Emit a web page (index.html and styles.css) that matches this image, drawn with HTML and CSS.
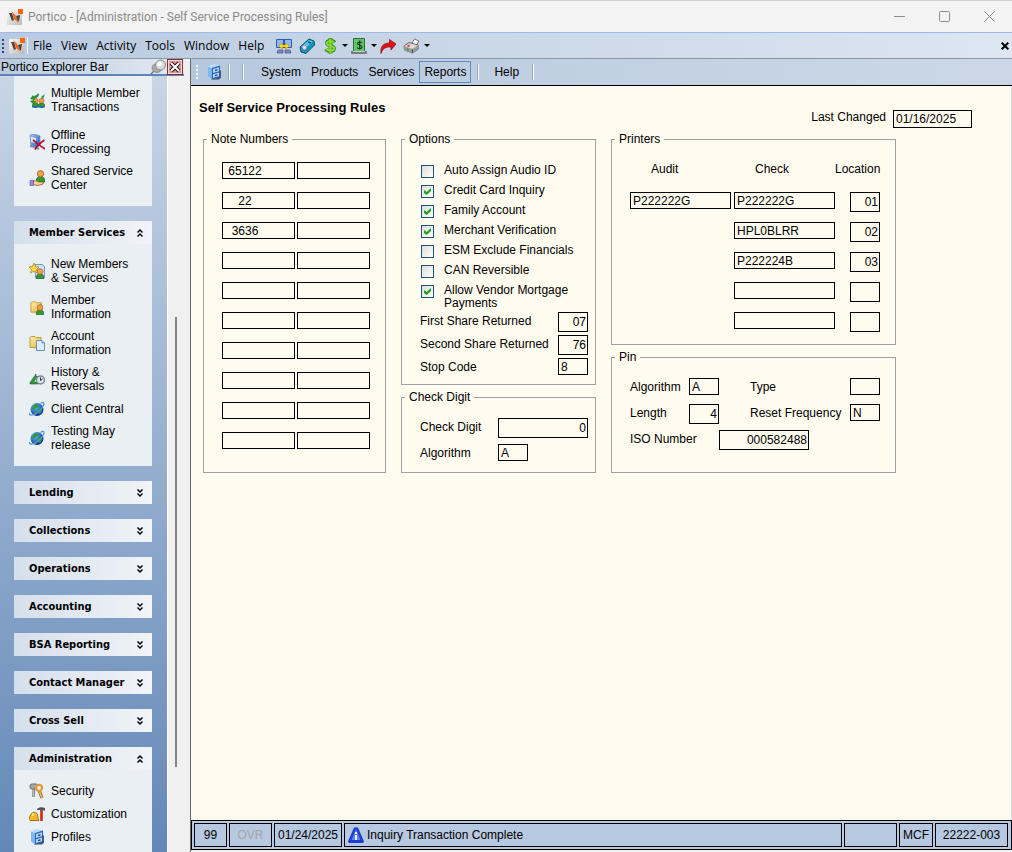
FILE: index.html
```html
<!DOCTYPE html>
<html lang="en">
<head>
<meta charset="UTF-8">
<title>Portico - [Administration - Self Service Processing Rules]</title>
<link rel="stylesheet" href="styles.css">
</head>
<body>
	<svg class="defs" aria-hidden="true">
		<defs>
			<linearGradient id="g-gold" x1="0" y1="0" x2="1" y2="1"><stop offset="0" stop-color="#fff3b0"/><stop offset="1" stop-color="#e0b23c"/></linearGradient>
			<linearGradient id="g-blue" x1="0" y1="0" x2="1" y2="1"><stop offset="0" stop-color="#9fd0f8"/><stop offset="1" stop-color="#1c55b8"/></linearGradient>
			<linearGradient id="g-logo" x1="0" y1="0" x2="1" y2="1"><stop offset="0" stop-color="#fafafa"/><stop offset="1" stop-color="#b9b9b9"/></linearGradient>
			<radialGradient id="g-globe" cx="35%" cy="30%" r="70%"><stop offset="0" stop-color="#6fc2ff"/><stop offset="1" stop-color="#0b2e9c"/></radialGradient>
		</defs>
		<symbol id="logo" viewBox="0 0 16 16">
			<rect x="0" y="1" width="15" height="15" rx="1" fill="url(#g-logo)"/>
			<path d="M2 4l3 0 2 7-2 1z" fill="#444"/>
			<path d="M9 7l4-1-1 6-2 0z" fill="#444"/>
			<path d="M4.500 2l4.500 5 3 7-5-4z" fill="#f26a1b"/>
			<rect x="11" y="0" width="5" height="5" fill="#f60"/>
		</symbol>
		<symbol id="globe" viewBox="0 0 16 16">
			<circle cx="8" cy="8.500" r="6.500" fill="url(#g-globe)"/>
			<path d="M4 5l3-2 3 1-1 2-2 1-2 2-2-1zM9 8l4-1v3l-2 3-2-1zM5 11l2 0 1 2-2 1z" fill="#2c9a3a"/>
			<path d="M1 12C-1 15 4 15 9 11S16 2 14.500 1.500c-1-.4-3 1-3 1" fill="none" stroke="#4b9bd8" stroke-width="1.300"/>
		</symbol>
		<symbol id="cabinet" viewBox="0 0 16 16">
			<path d="M5 15.500h8l2-2V6z" fill="#4a5566"/>
			<path d="M2 2.500L6 4v11.500L2 12.500z" fill="#7fb6f2"/>
			<path d="M2 2.500L7 0l7 1.500L6 4z" fill="#b9dcfb"/>
			<path d="M6 4l8-2.500V13l-8 2.500z" fill="#1f62be"/>
			<path d="M7 5l6-1.800v4L7 9zM7 10.300l6-1.800v3.700L7 14z" fill="#b5d6f7"/>
			<path d="M9 6.500l2.500-.7M9 11.600l2.500-.7" stroke="#28456e" stroke-width="1.400"/>
		</symbol>
		<symbol id="folder" viewBox="0 0 16 16">
			<path d="M1 3.500l1-1h4l1 1h5v10H1z" fill="url(#g-gold)" stroke="#c29a35"/>
		</symbol>
		<symbol id="person" viewBox="2 0 12 16">
			<path d="M2 15.500c0-5 3-7 6-7s6 2 6 7z" fill="#2f9a35" stroke="#1d6423"/>
			<circle cx="8" cy="5" r="4.300" fill="#f0a044" stroke="#a65e1c"/>
		</symbol>
		<symbol id="up" viewBox="0 0 8 10"><path d="M1.500 4.500L4 2l2.500 2.500M1.500 8.500L4 6l2.500 2.500" fill="none" stroke="#000" stroke-width="1.500"/></symbol>
		<symbol id="down" viewBox="0 0 8 10"><path d="M1.500 1.500L4 4l2.500-2.500M1.500 5.500L4 8l2.500-2.500" fill="none" stroke="#000" stroke-width="1.500"/></symbol>
	</svg>

	<header class="titlebar">
		<svg class="icon"><use href="#logo"/></svg>
		<span class="title">Portico - [Administration - Self Service Processing Rules]</span>
		<div class="winbuttons">
			<button type="button" aria-label="Minimize"><svg viewBox="0 0 11 11"><path d="M0 5.500h11"/></svg></button>
			<button type="button" aria-label="Maximize"><svg viewBox="0 0 11 11"><rect x=".5" y=".5" width="10" height="10" rx="1"/></svg></button>
			<button type="button" aria-label="Close"><svg viewBox="0 0 11 11"><path d="M.5.5l10 10M10.500.5l-10 10"/></svg></button>
		</div>
	</header>

	<nav class="menubar">
		<span class="grip"></span>
		<svg class="icon"><use href="#logo"/></svg>
		<div class="menus">
			<a href="#">File</a>
			<a href="#">View</a>
			<a href="#">Activity</a>
			<a href="#">Tools</a>
			<a href="#">Window</a>
			<a href="#">Help</a>
		</div>
		<div class="tools">
			<button type="button" aria-label="Connections"><svg class="icon" viewBox="0 0 16 16">
				<path d="M.5 1.500h8v8h-8zM7.500 1.500h8v8h-8z" fill="#8db9f2" stroke="#2b59b5"/>
				<path d="M2 12h5v3H1zM9 12h5l1 3H9z" fill="#7c8cc0" stroke="#454f80" stroke-width=".7"/>
				<path d="M2.500 8l4-3v2h3V5l4 3-4 3V9h-3v2z" fill="#ffe02e" stroke="#ba8a00" stroke-width=".6"/>
			</svg></button>
			<button type="button" aria-label="Terminal"><svg class="icon" viewBox="0 0 16 16">
				<path d="M1 9l9-8 5 2 .500 4L7 15.500 2 14z" fill="#1493b5" stroke="#07506e"/>
				<path d="M2 9l8-7 4 1.500L6.500 10z" fill="#52cde6"/>
				<circle cx="5.500" cy="9.500" r="2.200" fill="#f4dcf4" stroke="#9462b3" stroke-width=".6"/>
				<path d="M9 4l3 1" stroke="#08526b" stroke-width="1.500"/>
			</svg></button>
			<button type="button" aria-label="Money"><svg class="icon" viewBox="0 0 16 16">
				<path d="M12.500 4.500C11.500 2.500 5 2 5 5.200 5 8.500 12 7 12 10.500c0 3.500-7 3-8 .500M8.500 0v15.500" fill="none" stroke="#267f12" stroke-width="3.600"/>
				<path d="M12 4.500C11 2.500 5 2.500 5 5.200 5 8.500 12 7 12 10.500c0 3-6.500 2.500-7.500.500M8.500.5V15" fill="none" stroke="#86dc35" stroke-width="2.200"/>
			</svg><i class="arrow"></i></button>
			<button type="button" aria-label="Cash"><svg class="icon" viewBox="0 0 16 16">
				<path d="M2.500.5h11v13h-11z" fill="#63c46b" stroke="#276f35"/>
				<path d="M0 13h16v3H0z" fill="#777f80"/><path d="M2 13.500h12" stroke="#c8cccb"/>
				<path d="M11 5c-1-1.500-4.500-1.200-4.500.500C6.500 7.500 11 6.500 11 9c0 2-4 2-5 .500M8.700 2.500v9" fill="none" stroke="#103d1a" stroke-width="1.200"/>
			</svg><i class="arrow"></i></button>
			<button type="button" aria-label="Forward"><svg class="icon" viewBox="0 0 16 16">
				<path d="M1 15.500C0 8 4 5 9.500 5V1.500L16 6l-5 6V9C6 8.500 2.500 10.500 1 15.500z" fill="#dd151c" stroke="#8d090e" stroke-width=".7"/>
			</svg></button>
			<button type="button" aria-label="Print"><svg class="icon wide" viewBox="0 0 16 16">
				<path d="M8 6l3-5 4.500 2-3 5z" fill="#fff" stroke="#777"/>
				<path d="M.5 8l5-3.500 9 2.500.5 4-6 4L1 12z" fill="#dcdcdc" stroke="#666"/>
				<path d="M.5 8l8.500 3 6-4v4l-6 4L1 12z" fill="#9b9b9b"/>
				<path d="M9 11v4" stroke="#555"/><path d="M4 7.500l2 .5" stroke="#e33" stroke-width="2"/><path d="M3 11l2 .700" stroke="#3a3" stroke-width="1.500"/>
			</svg><i class="arrow"></i></button>
		</div>
		<button type="button" class="mdiclose" aria-label="Close form"><svg viewBox="0 0 8 8"><path d="M.7.7l6.600 6.600M7.300.7L.7 7.300"/></svg></button>
	</nav>

	<div class="workspace">
		<aside class="explorer">
			<div class="explorer-head">
				<h2>Portico Explorer Bar</h2>
				<button type="button" aria-label="Pin"><svg class="icon" viewBox="0 0 16 16">
					<path d="M1 15l4-4" stroke="#777" stroke-width="1.500"/>
					<ellipse cx="7" cy="9" rx="5" ry="4.500" fill="#aaa" stroke="#777" stroke-width=".7"/>
					<circle cx="10.500" cy="6" r="5" fill="#d9d9d9" stroke="#8b8b8b"/><circle cx="9.500" cy="5" r="2.500" fill="#fff"/>
				</svg></button>
				<button type="button" aria-label="Close explorer"><svg class="icon" viewBox="0 0 16 16">
					<rect x=".5" y=".5" width="15" height="15" fill="#d99a9c" stroke="#8d2e35"/>
					<rect x="1.500" y="1.500" width="13" height="13" fill="none" stroke="#f3dada"/>
					<path d="M4 4l8 8M12 4l-8 8" stroke="#2e1418" stroke-width="4"/><path d="M4 4l8 8M12 4l-8 8" stroke="#fff" stroke-width="2"/>
				</svg></button>
			</div>
			<div class="explorer-body">
				<div class="groups">
					<div class="panel first">
						<a class="item tall" href="#"><svg class="icon" viewBox="0 0 16 16">
							<use href="#person" x="3" y="5" width="7" height="11"/><use href="#person" x="9" y="5" width="7" height="11"/>
							<path d="M4.500 14h4v2h-4zM10.500 14h4v2h-4z" fill="#2364c8"/>
							<path d="M1 7l3-4 1 1.500C7 3 8 3 9 1l1 1.500C9 6 7 6 5.500 6.500L6 8zM1 9l4 4v-2l3-1-3-1V8zM12 5l4-3-2 5z" fill="#27903a"/>
						</svg><span>Multiple Member Transactions</span></a>
						<a class="item" href="#"><svg class="icon" viewBox="0 0 16 16">
							<path d="M1 1l4-1 6 2v9l-4 3-5-2z" fill="url(#g-blue)" stroke="#6786b2" stroke-width=".7"/>
							<path d="M2 3l5 1v5L2 8z" fill="#d7edff"/><path d="M1 12l5 1 4 2" stroke="#7390b5" stroke-width="2"/>
							<path d="M4 6c3 2 7 6 12 9M15.500 6C11 9 8 12 6 15.500" fill="none" stroke="#b80d25" stroke-width="1.700"/>
						</svg><span>Offline Processing</span></a>
						<a class="item" href="#"><svg class="icon" viewBox="0 0 16 16">
							<use href="#person" x="7" y="0" width="9" height="12"/>
							<path d="M4 11h4l2 1h5l-1 2-5 1.500-5-1z" fill="#f8d48c" stroke="#8a5a1e" stroke-width=".8"/>
							<path d="M1 10.500h3.500v5H1z" fill="#9b8ae6" stroke="#5747a8" stroke-width=".6"/>
						</svg><span>Shared Service Center</span></a>
					</div>
					<section>
						<button type="button" class="group">Member Services<svg class="chev"><use href="#up"/></svg></button>
						<div class="panel">
							<a class="item" href="#"><svg class="icon" viewBox="0 0 16 16">
								<path d="M6 1.500h7l2.500 2V15h-9z" fill="#cfe4fa" stroke="#6d93c4"/>
								<use href="#person" x="7" y="5" width="8" height="11"/>
								<path d="M5 0l1.500 3.500L10 4 7.500 6.500 8.500 10 5 8 1.500 10l1-3.500L0 4l3.500-.500z" fill="#ffd84a" stroke="#a67912" stroke-width=".7"/>
							</svg><span>New Members &amp;&nbsp;Services</span></a>
							<a class="item" href="#"><svg class="icon" viewBox="0 0 16 16"><use href="#folder" x="1" width="15" height="16"/><use href="#person" x="7" y="5" width="8" height="11"/></svg><span>Member Information</span></a>
							<a class="item" href="#"><svg class="icon" viewBox="0 0 16 16"><use href="#folder" y="-1" width="16" height="16"/><path d="M7.500 5.500H13l2.500 2.500v7.500h-8z" fill="#dceefe" stroke="#6b91bf"/><path d="M13 5.500V8h2.500" fill="none" stroke="#6b91bf"/></svg><span>Account Information</span></a>
							<a class="item" href="#"><svg class="icon" viewBox="0 0 16 16">
								<path d="M1 11.500L7 3v2.500h3v2H7L4.500 11H9v2H1z" fill="#32943b" stroke="#1e6426" stroke-width=".6"/>
								<circle cx="11.500" cy="9" r="4" fill="#d5e3e8" stroke="#788b94" stroke-width="1.400"/><path d="M11.500 6.500v3l2-1.500" fill="none" stroke="#334"/>
							</svg><span>History &amp; Reversals</span></a>
							<a class="item" href="#"><svg class="icon"><use href="#globe"/></svg><span>Client Central</span></a>
							<a class="item" href="#"><svg class="icon"><use href="#globe"/></svg><span>Testing May release</span></a>
						</div>
					</section>
					<button type="button" class="group">Lending<svg class="chev"><use href="#down"/></svg></button>
					<button type="button" class="group">Collections<svg class="chev"><use href="#down"/></svg></button>
					<button type="button" class="group">Operations<svg class="chev"><use href="#down"/></svg></button>
					<button type="button" class="group">Accounting<svg class="chev"><use href="#down"/></svg></button>
					<button type="button" class="group">BSA Reporting<svg class="chev"><use href="#down"/></svg></button>
					<button type="button" class="group">Contact Manager<svg class="chev"><use href="#down"/></svg></button>
					<button type="button" class="group">Cross Sell<svg class="chev"><use href="#down"/></svg></button>
					<section>
						<button type="button" class="group">Administration<svg class="chev"><use href="#up"/></svg></button>
						<div class="panel">
							<a class="item" href="#"><svg class="icon" viewBox="0 0 16 16">
								<path d="M5 5l-.5 9" stroke="#6e7074" stroke-width="2.600"/><path d="M5 5l-.5 9" stroke="#c4c3c4" stroke-width="1.200"/>
								<rect x="1" y="1" width="8" height="5" rx="2" fill="#a9a9a9" stroke="#66686c"/>
								<path d="M10 7l3 8" stroke="#8a5c1d" stroke-width="3.200"/><path d="M10 7l3 8" stroke="#f3b550" stroke-width="1.800"/>
								<circle cx="10" cy="4.800" r="3" fill="#fff" stroke="#dd9938" stroke-width="2.300"/>
							</svg><span>Security</span></a>
							<a class="item" href="#"><svg class="icon" viewBox="0 0 16 16">
								<path d="M0 13.500c1-5 3-8 6.500-7 2.500 1 2.500 4 2.500 6l1 2H1z" fill="#f8b821" stroke="#8e5d0b" stroke-width=".8"/><path d="M4 7v3" stroke="#fff0a4" stroke-width="1.300"/>
								<path d="M8 3c2-2 5-2 8-1v3l-2-1H8z" fill="#51565d"/><path d="M12.500 4v11" stroke="#c82a18" stroke-width="2.600"/>
							</svg><span>Customization</span></a>
							<a class="item" href="#"><svg class="icon"><use href="#cabinet"/></svg><span>Profiles</span></a>
						</div>
					</section>
				</div>
				<div class="track"><span class="thumb"></span></div>
			</div>
		</aside>

		<main class="form">
			<nav class="formbar">
				<span class="grip light"></span>
				<button type="button" aria-label="Profiles"><svg class="icon"><use href="#cabinet"/></svg></button>
				<span class="sep"></span>
				<span class="sep second"></span>
				<a href="#">System</a>
				<a href="#">Products</a>
				<a href="#">Services</a>
				<a href="#" class="active">Reports</a>
				<span class="sep"></span>
				<a href="#" class="help">Help</a>
				<span class="sep"></span>
			</nav>

			<form class="page" name="rules" action="#">
				<div class="page-head">
					<h1>Self Service Processing Rules</h1>
					<label for="changed">Last Changed</label>
					<input type="text" id="changed" class="date" value="01/16/2025">
				</div>
				<div class="columns">
					<fieldset class="notes">
						<legend>Note Numbers</legend>
						<div class="notegrid">
							<input type="text" aria-label="Note 1" value="65122"><input type="text" aria-label="Note 11">
							<input type="text" aria-label="Note 2" value="22"><input type="text" aria-label="Note 12">
							<input type="text" aria-label="Note 3" value="3636"><input type="text" aria-label="Note 13">
							<input type="text" aria-label="Note 4"><input type="text" aria-label="Note 14">
							<input type="text" aria-label="Note 5"><input type="text" aria-label="Note 15">
							<input type="text" aria-label="Note 6"><input type="text" aria-label="Note 16">
							<input type="text" aria-label="Note 7"><input type="text" aria-label="Note 17">
							<input type="text" aria-label="Note 8"><input type="text" aria-label="Note 18">
							<input type="text" aria-label="Note 9"><input type="text" aria-label="Note 19">
							<input type="text" aria-label="Note 10"><input type="text" aria-label="Note 20">
						</div>
					</fieldset>

					<div class="column narrow">
						<fieldset class="options">
							<legend>Options</legend>
							<label class="check"><input type="checkbox">Auto Assign Audio ID</label>
							<label class="check"><input type="checkbox" checked>Credit Card Inquiry</label>
							<label class="check"><input type="checkbox" checked>Family Account</label>
							<label class="check"><input type="checkbox" checked>Merchant Verification</label>
							<label class="check"><input type="checkbox">ESM Exclude Financials</label>
							<label class="check"><input type="checkbox">CAN Reversible</label>
							<label class="check"><input type="checkbox" checked>Allow Vendor Mortgage Payments</label>
							<div class="shares">
								<label for="share1">First Share Returned</label><input type="text" id="share1" class="small num" value="07">
								<label for="share2">Second Share Returned</label><input type="text" id="share2" class="small num" value="76">
								<label for="stop">Stop Code</label><input type="text" id="stop" class="small" value="8">
							</div>
						</fieldset>
						<fieldset class="grow">
							<legend>Check Digit</legend>
							<div class="digit">
								<label for="digit">Check Digit</label><input type="text" id="digit" class="medium num" value="0">
								<label for="digitalg">Algorithm</label><input type="text" id="digitalg" class="small" value="A">
							</div>
						</fieldset>
					</div>

					<div class="column">
						<fieldset class="printers">
							<legend>Printers</legend>
							<table>
								<thead>
									<tr><th>Audit</th><th>Check</th><th class="loc">Location</th></tr>
								</thead>
								<tbody>
									<tr><td><input type="text" aria-label="Audit 1" class="printer" value="P222222G"></td><td><input type="text" aria-label="Check 1" class="printer" value="P222222G"></td><td class="loc"><input type="text" aria-label="Location 1" class="small num" value="01"></td></tr>
									<tr><td></td><td><input type="text" aria-label="Check 2" class="printer" value="HPL0BLRR"></td><td class="loc"><input type="text" aria-label="Location 2" class="small num" value="02"></td></tr>
									<tr><td></td><td><input type="text" aria-label="Check 3" class="printer" value="P222224B"></td><td class="loc"><input type="text" aria-label="Location 3" class="small num" value="03"></td></tr>
									<tr><td></td><td><input type="text" aria-label="Check 4" class="printer"></td><td class="loc"><input type="text" aria-label="Location 4" class="small num"></td></tr>
									<tr><td></td><td><input type="text" aria-label="Check 5" class="printer"></td><td class="loc"><input type="text" aria-label="Location 5" class="small num"></td></tr>
								</tbody>
							</table>
						</fieldset>
						<fieldset class="grow">
							<legend>Pin</legend>
							<div class="pin">
								<label for="pinalg">Algorithm</label><input type="text" id="pinalg" class="small" value="A">
								<label for="pintype" class="right">Type</label><input type="text" id="pintype" class="small">
								<label for="pinlen">Length</label><input type="text" id="pinlen" class="small num" value="4">
								<label for="reset" class="right">Reset Frequency</label><input type="text" id="reset" class="small" value="N">
								<label for="iso" class="iso">ISO Number</label><input type="text" id="iso" class="medium num" value="000582488">
							</div>
						</fieldset>
					</div>
				</div>
			</form>

			<footer class="status">
				<span class="c-num">99</span>
				<span class="c-ovr">OVR</span>
				<span class="c-date">01/24/2025</span>
				<span class="c-msg"><svg class="icon" viewBox="0 0 16 16">
					<path d="M6 .5h4l6 14-1 1.500H1L0 14.500z" fill="#1c3ed0"/><path d="M8 2l4.500 11h-9z" fill="#5d83f5"/><path d="M8 5v2M8 8v5" stroke="#fff" stroke-width="1.800"/>
				</svg>Inquiry Transaction Complete</span>
				<span class="c-blank"></span>
				<span class="c-mcf">MCF</span>
				<span class="c-id">22222-003</span>
			</footer>
		</main>
	</div>
</body>
</html>
```

FILE: styles.css
```css
* {
	box-sizing: border-box;
}

body {
	margin: 0;
	height: 100vh;
	display: flex;
	flex-direction: column;
	overflow: hidden;
	background: #f0f0f0;
	color: #000;
	font: 12px/14px "Liberation Sans", Arial, sans-serif;
}

a {
	color: inherit;
	text-decoration: none;
}

button {
	border: 0;
	padding: 0;
	background: none;
	color: inherit;
	font: inherit;
	display: flex;
	align-items: center;
}

.defs {
	position: absolute;
	width: 0;
	height: 0;
}

.icon {
	width: 16px;
	height: 16px;
	flex: none;
}

.icon.wide {
	width: 17px;
}

/* title bar */
.titlebar {
	flex: none;
	height: 33px;
	display: flex;
	align-items: center;
	gap: 5px;
	padding-left: 7px;
	background: #f3f3f3;
	border-top: 1px solid #d0d0d0;
	border-bottom: 1px solid #99bbee;
	color: #8a8a8a;
	font: 12px Roboto, "Open Sans", sans-serif;
}

.winbuttons {
	margin-left: auto;
	display: flex;
}

.winbuttons button {
	width: 45px;
	height: 30px;
	justify-content: center;
}

.winbuttons svg {
	width: 11px;
	height: 11px;
	fill: none;
	stroke: #8c8c8c;
}

/* menu bar */
.menubar {
	flex: none;
	height: 26px;
	display: flex;
	align-items: center;
	background: linear-gradient(90deg, #b9cae0, #dde6f1);
	border-bottom: 1px solid #8a95a5;
	font: 12px "Open Sans", sans-serif;
}

.grip {
	width: 2px;
	height: 14px;
	margin: 0 5px 0 2px;
	background: repeating-linear-gradient(#2b4a80 0 2px, transparent 2px 4px);
}

.grip.light {
	margin: 0 8px 0 5px;
	background: repeating-linear-gradient(#f5f7fa 0 2px, transparent 2px 4px);
}

.menus {
	display: flex;
	gap: 9px;
	margin-left: 2px;
	padding-left: 5px;
	border-left: 1px solid #f5f8fc;
}

.tools {
	display: flex;
	gap: 7px;
	margin-left: 12px;
}

.arrow {
	margin-left: 4px;
	border: 3px solid transparent;
	border-top-color: #000;
	border-bottom: 0;
}

.tools .arrow {
	margin-right: -4px;
}

.mdiclose {
	margin: 0 3px 0 auto;
}

.mdiclose svg {
	width: 8px;
	height: 8px;
	stroke: #000;
	stroke-width: 2;
}

.workspace {
	flex: 1;
	min-height: 0;
	display: flex;
	gap: 6px;
}

/* explorer */
.explorer {
	flex: none;
	width: 184px;
	display: flex;
	flex-direction: column;
}

.explorer-head {
	flex: none;
	height: 17px;
	display: flex;
	align-items: center;
	gap: 1px;
	padding: 0 1px;
	background: linear-gradient(90deg, #b9cade, #e3eaf2);
	border-bottom: 2px solid #5f83b8;
}

.explorer-head h2 {
	flex: 1;
	margin: 0;
	font: inherit;
}

.explorer-body {
	flex: 1;
	min-height: 0;
	display: flex;
}

.groups {
	width: 167px;
	padding: 0 15px 0 14px;
	display: flex;
	flex-direction: column;
	gap: 15px;
	overflow: hidden;
	background: linear-gradient(#c8d5e6, #6388b8);
}

.groups > * {
	flex: none;
}

.group {
	width: 100%;
	height: 23px;
	justify-content: space-between;
	padding: 0 8px 0 15px;
	background: linear-gradient(90deg, #d5dfeb, #f1f4f8);
	font: bold 11px "DejaVu Sans Condensed", "DejaVu Sans", sans-serif;
}

.chev {
	width: 8px;
	height: 10px;
}

.panel {
	display: flex;
	flex-direction: column;
	gap: 8px;
	padding: 13px 4px 14px 15px;
	background: #eaeff4;
}

.panel.first {
	padding-top: 4px;
}

.item {
	min-height: 15px;
	display: flex;
	align-items: center;
	gap: 6px;
}

.item.tall {
	min-height: 40px;
}

.item .icon {
	margin: -1px 0;
}

.item span {
	max-width: 94px;
}

.track {
	flex: 1;
	display: grid;
	grid-template-rows: 31fr 58fr 11fr;
	justify-content: center;
	border-left: 1px solid #fff;
}

.thumb {
	grid-row: 2;
	width: 2px;
	background: #858585;
}

/* form window */
.form {
	flex: 1;
	min-width: 0;
	display: flex;
	flex-direction: column;
	border-left: 1px solid #666;
}

.formbar {
	flex: none;
	height: 27px;
	display: flex;
	align-items: center;
	border-bottom: 1px solid #000;
	background: linear-gradient(90deg, #b7c8de, #ccd8e7);
}

.formbar a {
	padding: 3px 4px;
	border: 1px solid transparent;
}

.formbar a.active {
	border-color: #5b8cc0;
}

.formbar a.help {
	padding: 3px 6px 3px 10px;
}

.sep {
	width: 2px;
	height: 16px;
	margin: 0 4px 0 6px;
	border-left: 1px solid #9aa8bb;
	border-right: 1px solid #fff;
}

.sep.second {
	margin: 0 12px 0 8px;
}

.page {
	flex: 1;
	background: #fffbef;
	border-right: 1px solid #d8dce2;
}

.page-head {
	display: flex;
	align-items: flex-start;
	height: 46px;
	padding: 24px 39px 0 8px;
}

.page-head h1 {
	flex: 1;
	margin: -9px 0 0;
	font-size: 13px;
}

.page-head label {
	margin-right: 7px;
}

.page-head .date[type="text"] {
	width: 79px;
	height: 18px;
}

.columns {
	display: flex;
	gap: 15px;
	padding-left: 12px;
}

.column {
	display: flex;
	flex-direction: column;
	gap: 5px;
}

.grow {
	flex: 1;
}

fieldset {
	margin: 0;
	min-width: 0;
	padding: 14px 15px 9px 18px;
	border: 1px solid #a0a0a0;
}

legend {
	margin-left: -15px;
	padding: 0 4px;
}

input[type="text"] {
	height: 17px;
	margin: 0;
	padding: 0 2px;
	border: 1px solid #000;
	border-radius: 0;
	background: transparent;
	color: #000;
	font: inherit;
}

input.small {
	width: 30px;
}

input.medium {
	width: 90px;
}

input.printer {
	width: 101px;
}

input.num[type="text"] {
	height: 20px;
	padding: 0 1px;
	text-align: right;
}

.notes {
	padding: 16px 15px 23px 18px;
}

.notegrid {
	display: grid;
	grid-template-columns: 73px 73px;
	gap: 13px 2px;
}

.notegrid input[type="text"] {
	padding-right: 29px;
	text-align: center;
}

.narrow fieldset {
	padding-right: 7px;
}

fieldset.options {
	padding-top: 17px;
}

.check {
	display: flex;
	align-items: flex-start;
	gap: 10px;
	width: 160px;
	min-height: 20px;
	padding: 1px 0 0 1px;
	line-height: 13px;
}

.check input {
	appearance: none;
	flex: none;
	display: grid;
	place-items: center;
	width: 13px;
	height: 13px;
	margin: 1px 0 0;
	border: 1px solid #1c5180;
	background: linear-gradient(135deg, #dcdcd7, #fff);
}

.check input:checked::before {
	content: "";
	width: 7px;
	height: 7px;
	background: #21a121;
	clip-path: polygon(0 28%, 38% 58%, 100% 0, 100% 42%, 38% 100%, 0 70%);
}

.shares {
	display: grid;
	grid-template-columns: 138px auto;
	gap: 3px 0;
	margin-top: 2px;
}

.shares label,
.digit label,
.pin label {
	padding-top: 2px;
}

.digit {
	display: grid;
	grid-template-columns: 78px auto;
	gap: 6px 0;
}

.printers {
	padding-bottom: 2px;
}

.printers table {
	border-collapse: collapse;
}

.printers th {
	height: 32px;
	padding: 2px 0 16px 21px;
	font-weight: normal;
	text-align: left;
}

.printers td {
	height: 30px;
	padding: 0 3px 0 0;
	vertical-align: top;
}

.printers td:nth-child(2) {
	padding-right: 0;
}

.printers td input {
	display: block;
}

.printers th.loc {
	padding-left: 0;
}

.printers td.loc {
	padding: 0 0 0 15px;
}

/* the ISO box starts where the small boxes end */
.pin {
	display: grid;
	grid-template-columns: 59px 30px 31px 100px 30px;
	grid-auto-rows: 20px;
	gap: 6px 0;
}

.pin .right {
	grid-column: 4;
}

.pin .iso {
	grid-column: 1 / 3;
}

.pin #iso {
	grid-column: 3 / 5;
}

/* status bar */
.status {
	flex: none;
	height: 30px;
	display: flex;
	gap: 2px;
	margin-bottom: 2px;
	padding: 2px 3px 2px 2px;
	border: 1px solid #000;
	background: #b7c9e0;
}

.status span {
	height: 24px;
	display: flex;
	align-items: center;
	justify-content: center;
	border: 1px solid #000;
	padding: 0 3px;
}

.status .c-num {
	width: 33px;
}

.status .c-ovr {
	width: 43px;
	color: #a5a5a5;
}

.status .c-date {
	width: 68px;
}

.status .c-msg {
	flex: 1;
	justify-content: flex-start;
	gap: 3px;
}

.status .c-blank {
	width: 53px;
}

.status .c-mcf {
	width: 34px;
}

.status .c-id {
	width: 73px;
}
```
